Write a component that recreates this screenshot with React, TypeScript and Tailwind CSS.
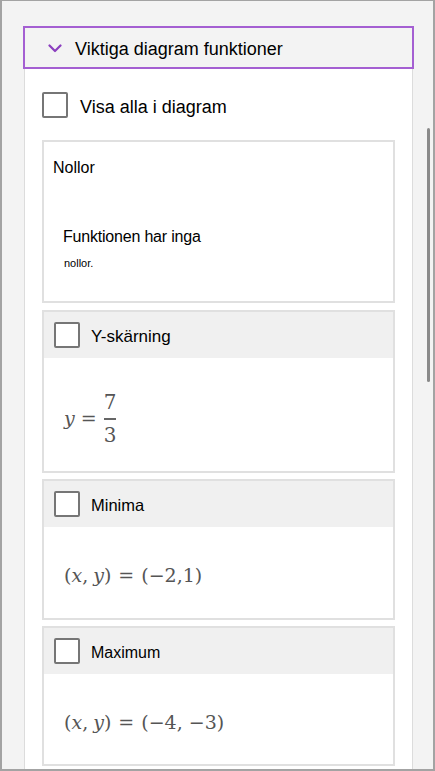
import React from 'react';

const sans = { fontFamily: '"Liberation Sans", Arial, sans-serif' };
const math = { fontFamily: '"DejaVu Serif", "Liberation Serif", serif' };

function CheckBox() {
  return (
    <span className="box-border block h-[26px] w-[26px] shrink-0 rounded-[2px] border-2 border-[#767676] bg-white" />
  );
}

function Point({ values }: { values: string }) {
  return (
    <div className="flex items-baseline text-[19px] leading-none text-[#555555]" style={math}>
      <span>(</span>
      <span className="italic">x</span>
      <span>,</span>
      <span className="ml-[5px] italic">y</span>
      <span>)</span>
      <span className="mx-[7px]">=</span>
      <span>{values}</span>
    </div>
  );
}

function FeatureCard({
  title,
  titleSize,
  height,
  bodyTop,
  children,
  className,
}: {
  title: string;
  titleSize: string;
  height: string;
  bodyTop: string;
  children: React.ReactNode;
  className?: string;
}) {
  return (
    <div className={`box-border flex flex-col border-2 border-[#e0e0e0] bg-white ${height} ${className ?? ''}`}>
      <div className="flex h-[46px] shrink-0 items-center bg-[#f0f0f0] pl-[10px]">
        <CheckBox />
        <span className={`ml-[11px] pt-[3px] leading-none text-black ${titleSize}`}>{title}</span>
      </div>
      <div className={`pl-[20px] ${bodyTop}`}>{children}</div>
    </div>
  );
}

export default function App() {
  return (
    <div
      className="box-border flex h-[771px] w-[435px] overflow-hidden border-t border-r-2 border-b-2 border-l-2 border-[#a3a3a3] bg-[#f3f3f3]"
      style={sans}
    >
      <div className="ml-[21px] flex w-[391px] shrink-0 flex-col pt-[25px]">
        {/* section header */}
        <div className="box-border flex h-[43px] shrink-0 items-center border-2 border-[#a45fd2] bg-[#f3f3f3] pl-[23px]">
          <svg width="14" height="9" viewBox="0 0 14 9" fill="none" className="mt-[2px]">
            <path d="M1.5 1.5 L7 7 L12.5 1.5" stroke="#8b3fbf" strokeWidth="2.2" strokeLinecap="round" strokeLinejoin="round" />
          </svg>
          <span className="ml-[13px] pt-[3px] text-[18px] leading-none text-black">Viktiga diagram funktioner</span>
        </div>

        {/* panel */}
        <div className="mx-px box-border flex flex-1 flex-col border-x border-[#dcdcdc] bg-white px-[17px] pt-[23px]">
          <div className="flex items-center">
            <CheckBox />
            <span className="ml-[12px] pt-[4px] text-[18px] leading-none text-black">Visa alla i diagram</span>
          </div>

          {/* Nollor */}
          <div className="mt-[22px] box-border h-[163px] border-2 border-[#e0e0e0] bg-white pt-[16px] pl-[9px] text-black">
            <div className="text-[16px] leading-[20px]">Nollor</div>
            <div className="mt-[49px] ml-[10px] text-[16px] leading-[20px] tracking-[-0.2px]">Funktionen har inga</div>
            <div className="mt-[9px] ml-[11px] text-[11px] leading-[14px]">nollor.</div>
          </div>

          <FeatureCard title="Y-skärning" titleSize="text-[17px]" height="h-[163px]" bodyTop="pt-[34px]" className="mt-[7px]">
            <div className="flex items-center text-[19px] leading-none text-[#555555]" style={math}>
              <span className="italic">y</span>
              <span className="mx-[6px]">=</span>
              <span className="flex flex-col items-center">
                <span className="px-[1px] pb-[6px] text-[20px] leading-[20px]">7</span>
                <span className="h-[1.5px] w-[12px] bg-[#666666]" />
                <span className="px-[1px] pt-[5px] text-[20px] leading-[20px]">3</span>
              </span>
            </div>
          </FeatureCard>

          <FeatureCard title="Minima" titleSize="text-[16.5px]" height="h-[141px]" bodyTop="pt-[39px]" className="mt-[6px]">
            <Point values="(−2,1)" />
          </FeatureCard>

          <FeatureCard title="Maximum" titleSize="text-[16px]" height="h-[140px]" bodyTop="pt-[39px]" className="mt-[6px]">
            <Point values="(−4, −3)" />
          </FeatureCard>
        </div>
      </div>

      {/* scrollbar */}
      <div className="flex-1 pt-[127px] pl-[13px]">
        <div className="h-[254px] w-[3px] rounded-full bg-[#8a8a8a]" />
      </div>
    </div>
  );
}
